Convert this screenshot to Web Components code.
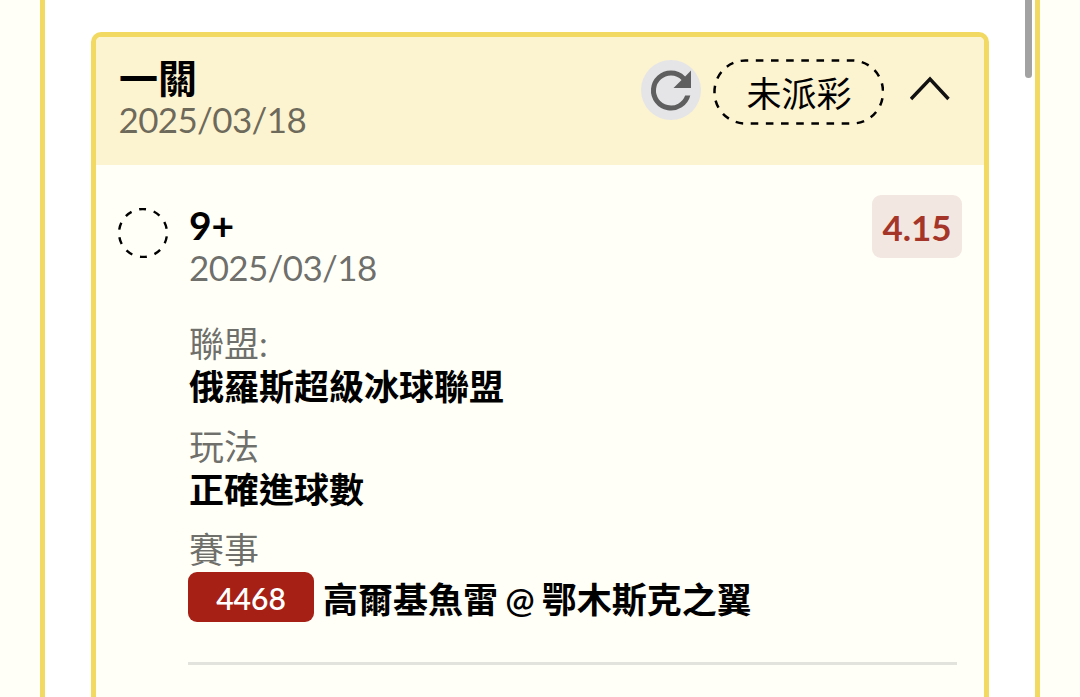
<!DOCTYPE html>
<html lang="zh-Hant">
<head>
<meta charset="utf-8">
<title>一關</title>
<style>
  html, body {
    margin: 0;
    height: 100%;
    overflow: hidden;
  }
  body {
    --line: #f2da62;
    --paper: #fffff7;
    --muted: rgba(0, 0, 0, 0.58);
    --red: #a62016;
    background: var(--paper);
    color: #000;
    font-family: Lato, "Noto Sans CJK TC", sans-serif;
    font-size: 35px;
    line-height: 43px;
  }
</style>
</head>
<body>
<ticket-panel>
  <bet-card heading="一關" date="2025/03/18" status="未派彩">
    <bet-leg pick="9+" date="2025/03/18" odds="4.15">
      <leg-field label="聯盟:">俄羅斯超級冰球聯盟</leg-field>
      <leg-field label="玩法">正確進球數</leg-field>
      <leg-field label="賽事"><match-code>4468</match-code><match-teams>高爾基魚雷 @ 鄂木斯克之翼</match-teams></leg-field>
    </bet-leg>
  </bet-card>
</ticket-panel>

<script>
class TicketPanel extends HTMLElement {
  constructor() {
    super();
    this.attachShadow({ mode: "open" });
  }

  connectedCallback() {
    this.shadowRoot.innerHTML = `
      <style>
        :host {
          display: block;
          position: relative;
          box-sizing: border-box;
          height: 100vh;
          margin: 0 40px;
          padding: 32px 46px 0;
          border: solid var(--line);
          border-width: 0 5px;
          background: #fff;
          overflow: hidden;
        }
        .thumb {
          position: absolute;
          top: -10px;
          right: 3px;
          width: 7px;
          height: 88px;
          border-radius: 4px;
          background: #a2a2a2;
        }
      </style>
      <slot></slot>
      <div class="thumb"></div>
    `;
  }
}

class RefreshButton extends HTMLElement {
  constructor() {
    super();
    this.attachShadow({ mode: "open" });
  }

  connectedCallback() {
    this.shadowRoot.innerHTML = `
      <style>
        :host {
          display: block;
          width: 60px;
          height: 60px;
          border-radius: 50%;
          background: #e5e5e7;
        }
        svg { display: block; }
      </style>
      <svg width="60" height="60" viewBox="0 -0.2 24 24" fill="#5f5f5f">
        <path d="M17.65 6.35A7.96 7.96 0 0 0 12 4a8 8 0 1 0 7.73 10h-2.08A6 6 0 1 1 12 6c1.66 0 3.14.69 4.22 1.78L13 11h7V4l-2.35 2.35z"/>
      </svg>
    `;
  }
}

class StatusPill extends HTMLElement {
  constructor() {
    super();
    this.attachShadow({ mode: "open" });
  }

  connectedCallback() {
    this.shadowRoot.innerHTML = `
      <style>
        :host {
          display: grid;
          width: 171px;
          height: 66px;
          place-items: center;
        }
        svg, span { grid-area: 1 / 1; }
        span { padding: 3px 0 0 1px; }
      </style>
      <svg width="171" height="66" fill="none" stroke="#000" stroke-width="2.5">
        <rect x="1.5" y="1.5" width="168.500" height="63" rx="31" pathLength="270"
          stroke-dasharray="5 5" stroke-dashoffset="3.2"/>
      </svg>
      <span><slot></slot></span>
    `;
  }
}

class BetCard extends HTMLElement {
  constructor() {
    super();
    this.attachShadow({ mode: "open" });
  }

  connectedCallback() {
    this.shadowRoot.innerHTML = `
      <style>
        :host {
          display: block;
          box-sizing: border-box;
          width: 898px;
          height: 760px;
          border: 5px solid var(--line);
          border-radius: 10px;
          background: var(--paper);
          overflow: hidden;
        }
        header {
          display: flex;
          box-sizing: border-box;
          height: 128px;
          padding: 20px 34px 0 22px;
          background: #fcf3d0;
        }
        .title { flex: 1; }
        h2 {
          margin: 0;
          padding: 1px 0 0 1px;
          font-size: 39px;
          line-height: 40px;
          font-weight: 700;
        }
        .date {
          padding-left: 0.5px;
          color: var(--muted);
          letter-spacing: -0.65px;
        }
        .actions {
          display: flex;
          align-items: flex-start;
        }
        refresh-button { margin: 3px 12px 0 0; }
        status-pill { margin: 2px 26px 0 0; }
        .arrow { margin-top: 19px; }
      </style>
      <header>
        <div class="title">
          <h2>${this.getAttribute("heading")}</h2>
          <div class="date">${this.getAttribute("date")}</div>
        </div>
        <div class="actions">
          <refresh-button></refresh-button>
          <status-pill>${this.getAttribute("status")}</status-pill>
          <svg class="arrow" width="40" height="25" fill="none" stroke="#111" stroke-width="3.4">
            <path d="M1 23L20 3L38.500 23"/>
          </svg>
        </div>
      </header>
      <slot></slot>
    `;
  }
}

class BetLeg extends HTMLElement {
  constructor() {
    super();
    this.attachShadow({ mode: "open" });
  }

  connectedCallback() {
    this.shadowRoot.innerHTML = `
      <style>
        :host {
          display: grid;
          grid-template-columns: 50px 769px;
          column-gap: 20px;
          padding: 30px 0 0 22px;
        }
        .ring { margin-top: 13px; }
        .summary {
          display: flex;
          justify-content: space-between;
          width: 774px;
        }
        .pick {
          margin: 10px 0 0 1px;
          font-size: 39px;
          line-height: 41px;
          font-weight: 700;
        }
        .date {
          margin-left: 1px;
          color: var(--muted);
          letter-spacing: -0.65px;
        }
        .odds {
          box-sizing: border-box;
          width: 90px;
          height: 63px;
          border-radius: 9px;
          background: #f3e7e1;
          color: #a53529;
          font-size: 35px;
          font-weight: 700;
          line-height: 64px;
          text-align: center;
        }
        .fields {
          display: grid;
          row-gap: 17px;
          margin-top: 33px;
          padding-bottom: 40px;
          border-bottom: 3px solid #e3e3dd;
        }
      </style>
      <svg class="ring" width="50" height="50" fill="none" stroke="#000" stroke-width="2.4">
        <circle cx="25" cy="25" r="24" pathLength="100" stroke-dasharray="4.700 5.300"
          stroke-dashoffset="2.350" transform="rotate(-91 25 25)"/>
      </svg>
      <div>
        <div class="summary">
          <div>
            <div class="pick">${this.getAttribute("pick")}</div>
            <div class="date">${this.getAttribute("date")}</div>
          </div>
          <div class="odds">${this.getAttribute("odds")}</div>
        </div>
        <div class="fields"><slot></slot></div>
      </div>
    `;
  }
}

class LegField extends HTMLElement {
  constructor() {
    super();
    this.attachShadow({ mode: "open" });
  }

  connectedCallback() {
    this.shadowRoot.innerHTML = `
      <style>
        :host { display: block; }
        .label {
          padding-left: 1px;
          color: var(--muted);
        }
        .value {
          display: flex;
          align-items: center;
          font-weight: 700;
          text-indent: 1px;
        }
      </style>
      <div class="label">${this.getAttribute("label")}</div>
      <div class="value"><slot></slot></div>
    `;
  }
}

class MatchCode extends HTMLElement {
  constructor() {
    super();
    this.attachShadow({ mode: "open" });
  }

  connectedCallback() {
    this.shadowRoot.innerHTML = `
      <style>
        :host {
          display: block;
          width: 126px;
          height: 50px;
          margin: 1px 9px 0 0;
          border-radius: 9px;
          background: var(--red);
          color: #fff;
          font-size: 30px;
          font-weight: 600;
          line-height: 52px;
          text-align: center;
          text-indent: 0;
        }
      </style>
      <slot></slot>
    `;
  }
}

class MatchTeams extends HTMLElement {
  constructor() {
    super();
    this.attachShadow({ mode: "open" });
  }

  connectedCallback() {
    this.shadowRoot.innerHTML = `
      <style>
        :host {
          display: block;
          padding-top: 5px;
          font-weight: 600;
          text-indent: 0;
          white-space: nowrap;
          word-spacing: -1.5px;
        }
      </style>
      <slot></slot>
    `;
  }
}

customElements.define("ticket-panel", TicketPanel);
customElements.define("refresh-button", RefreshButton);
customElements.define("status-pill", StatusPill);
customElements.define("bet-card", BetCard);
customElements.define("bet-leg", BetLeg);
customElements.define("leg-field", LegField);
customElements.define("match-code", MatchCode);
customElements.define("match-teams", MatchTeams);
</script>
</body>
</html>
